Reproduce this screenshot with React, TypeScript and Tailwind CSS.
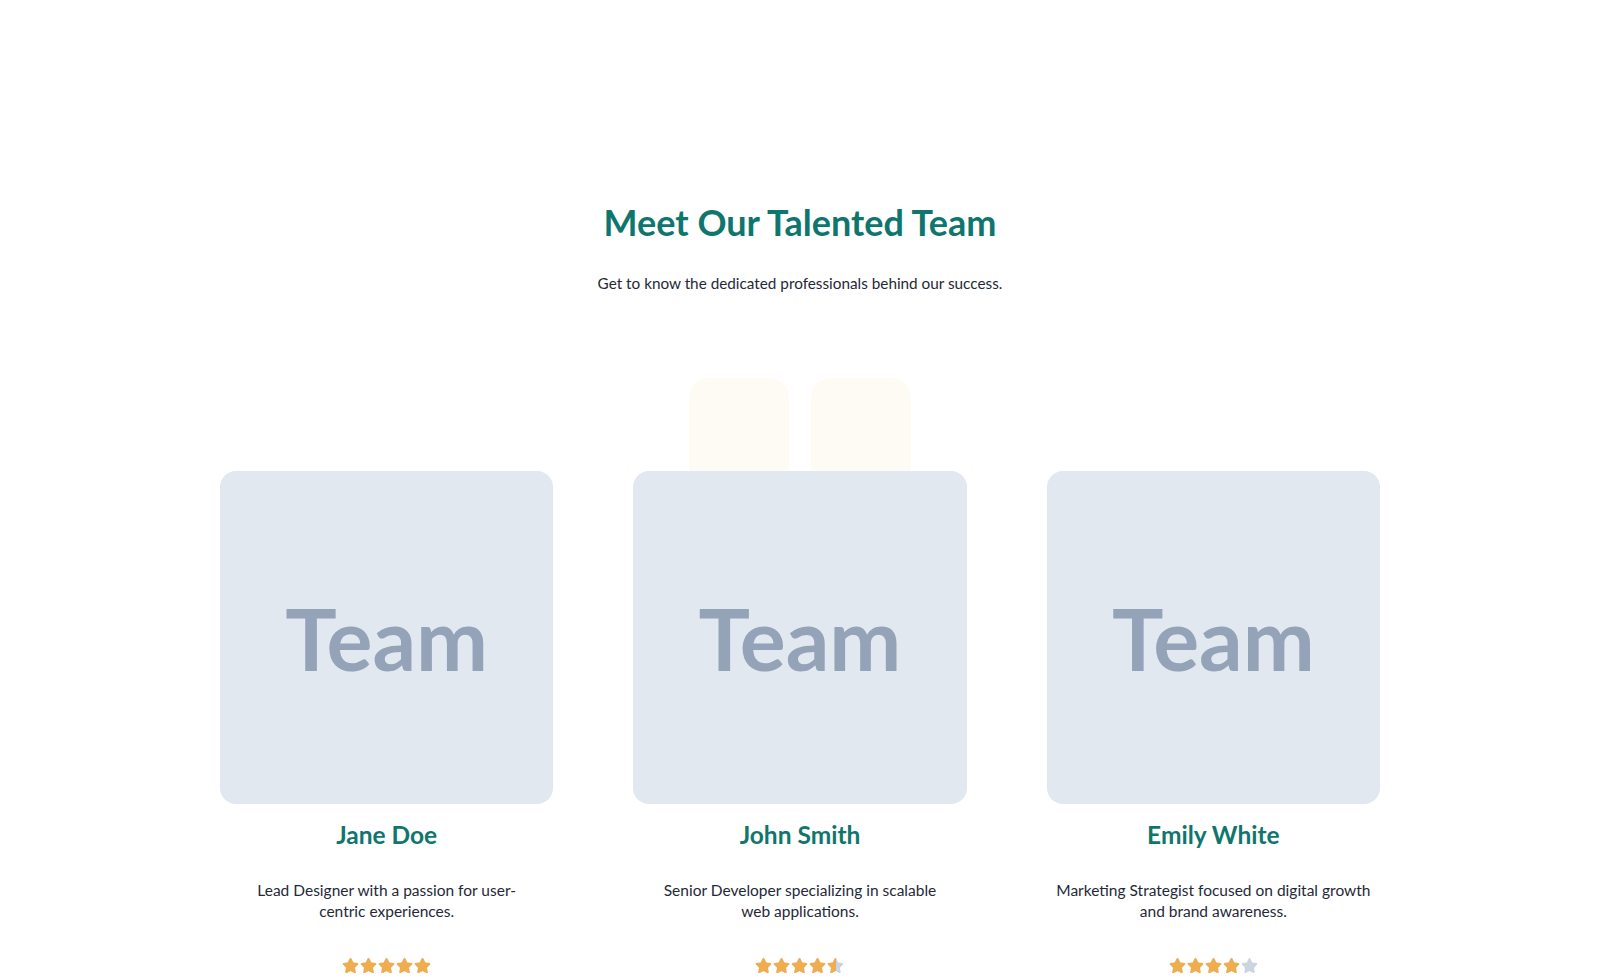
import { FaStar } from "react-icons/fa6";

interface Member {
  name: string;
  lines: string[];
  rating: number;
}

const members: Member[] = [
  {
    name: "Jane Doe",
    lines: ["Lead Designer with a passion for user-", "centric experiences."],
    rating: 5,
  },
  {
    name: "John Smith",
    lines: ["Senior Developer specializing in scalable", "web applications."],
    rating: 4.5,
  },
  {
    name: "Emily White",
    lines: ["Marketing Strategist focused on digital growth", "and brand awareness."],
    rating: 4,
  },
];

function Stars({ rating }: { rating: number }) {
  return (
    <div className="flex items-center justify-center gap-px">
      {[0, 1, 2, 3, 4].map((i) => {
        const fill = Math.max(0, Math.min(1, rating - i));
        return (
          <span key={i} className="relative block h-[17px] w-[17px]">
            <FaStar className="h-[17px] w-[17px] text-[#cbd5e1]" />
            {fill > 0 && (
              <span
                className="absolute inset-y-0 left-0 overflow-hidden"
                style={{ width: `${fill * 100}%` }}
              >
                <FaStar className="h-[17px] w-[17px] text-[#f0ad4e]" />
              </span>
            )}
          </span>
        );
      })}
    </div>
  );
}

function MemberCard({ member }: { member: Member }) {
  return (
    <div className="relative z-10 flex flex-col items-center text-center">
      <div className="flex aspect-square w-full items-center justify-center rounded-2xl bg-[#e2e8f0]">
        <span className="font-['Lato',sans-serif] text-[86px] font-bold leading-none text-[#94a3b8]">
          Team
        </span>
      </div>
      <h3 className="mt-[15px] text-[24.5px] font-bold leading-8 text-[#0f766e]">
        {member.name}
      </h3>
      <p className="mt-[29px] text-[15.5px] leading-[20.5px] text-[#1f2937]">
        {member.lines.map((line) => (
          <span key={line} className="block whitespace-nowrap">
            {line}
          </span>
        ))}
      </p>
      <div className="mt-[36px]">
        <Stars rating={member.rating} />
      </div>
    </div>
  );
}

export default function App() {
  return (
    <section className="min-h-screen bg-white pb-20 pt-[202px] font-['Lato',sans-serif]">
      <div className="mx-auto flex w-[1160px] flex-col items-center">
        <h2 className="text-4xl font-bold leading-10 text-[#0f766e]">
          Meet Our Talented Team
        </h2>
        <p className="mt-[29px] text-[15.3px] leading-6 text-[#1f2937]">
          Get to know the dedicated professionals behind our success.
        </p>

        <div className="relative mt-[176px] w-full">
          {/* decorative tiles peeking out behind the middle card */}
          <div className="absolute -top-[93px] left-1/2 z-0 flex -translate-x-1/2 gap-[22px]">
            <div className="h-[110px] w-[100px] rounded-[20px] bg-[#fdfbf3]" />
            <div className="h-[110px] w-[100px] rounded-[20px] bg-[#fdfbf3]" />
          </div>

          <div className="grid grid-cols-3 gap-20">
            {members.map((m) => (
              <MemberCard key={m.name} member={m} />
            ))}
          </div>
        </div>
      </div>
    </section>
  );
}
